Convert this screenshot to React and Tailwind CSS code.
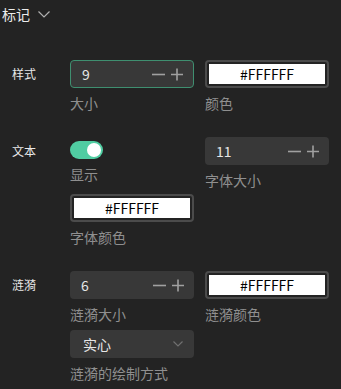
import React from "react";

const font = { fontFamily: '"Noto Sans CJK SC", "Noto Sans", sans-serif' };

function Minus() {
  return (
    <svg width="13" height="13" viewBox="0 0 13 13">
      <path d="M0 6.5 H13" stroke="#a0a0a0" strokeWidth="1.6" />
    </svg>
  );
}
function Plus() {
  return (
    <svg width="12" height="13" viewBox="0 0 12 13">
      <path d="M0 6.5 H12 M6 0.5 V12.5" stroke="#a0a0a0" strokeWidth="1.6" />
    </svg>
  );
}

function NumberBox({ value, focused }) {
  return (
    <div
      className={
        "flex h-[28px] w-[124px] items-center justify-between rounded-[4px] bg-[#383838] pl-[11px] pr-[10px] " +
        (focused ? "border border-[#3f8f70]" : "")
      }
    >
      <span className="text-[14px] leading-none text-[#e6e6e6]">{value}</span>
      <div className="flex items-center gap-[6px]">
        <Minus />
        <Plus />
      </div>
    </div>
  );
}

function ColorBox() {
  return (
    <div className="h-[28px] w-[124px] rounded-[4px] border-2 border-[#4b4b4b] p-[2px]">
      <div className="flex h-full w-full items-center justify-center bg-white text-[14px] leading-none text-black">
        #FFFFFF
      </div>
    </div>
  );
}

function Label({ children }) {
  return <div className="mt-[5px] text-[14px] leading-[20px] text-[#8f8f8f]">{children}</div>;
}

function Toggle() {
  return (
    <div className="mt-[4px] flex h-[18px] w-[33px] items-center justify-end rounded-full bg-[#50cda2] pr-[2px]">
      <div className="h-[14px] w-[14px] rounded-full bg-white" />
    </div>
  );
}

function Select() {
  return (
    <div className="flex h-[28px] w-[124px] items-center justify-between rounded-[4px] bg-[#383838] pl-[13px] pr-[11px]">
      <span className="text-[14px] leading-none text-[#e6e6e6]">实心</span>
      <svg width="10" height="6" viewBox="0 0 10 6">
        <path d="M0.5 0.5 L5 5 L9.5 0.5" fill="none" stroke="#707070" strokeWidth="1.2" />
      </svg>
    </div>
  );
}

function Section({ title, children, rowGap }) {
  return (
    <div className="flex">
      <div className="flex h-[28px] w-[70px] items-center pl-[12px] text-[12px] text-[#e8e8e8]">{title}</div>
      <div className={"flex w-[260px] flex-wrap gap-x-[11px] " + rowGap}>{children}</div>
    </div>
  );
}

export default function App() {
  return (
    <div style={font} className="h-[389px] w-[341px] overflow-hidden bg-[#232323]">
      <div className="flex h-[28px] items-center pl-[2px]">
        <span className="text-[14px] text-[#ececec]">标记</span>
        <svg className="ml-[8px]" width="12" height="7" viewBox="0 0 12 7">
          <path d="M0.5 0.5 L6 6 L11.5 0.5" fill="none" stroke="#b0b0b0" strokeWidth="1.2" />
        </svg>
      </div>
      <div className="mt-[32px] flex flex-col gap-[24px]">
        <Section title="样式" rowGap="gap-y-[4px]">
          <div className="w-[124px]">
            <NumberBox value="9" focused />
            <Label>大小</Label>
          </div>
          <div className="w-[124px]">
            <ColorBox />
            <Label>颜色</Label>
          </div>
        </Section>
        <Section title="文本" rowGap="gap-y-[4px]">
          <div className="w-[124px]">
            <Toggle />
            <Label>显示</Label>
          </div>
          <div className="w-[124px]">
            <NumberBox value="11" />
            <Label>字体大小</Label>
          </div>
          <div className="w-[124px]">
            <ColorBox />
            <Label>字体颜色</Label>
          </div>
        </Section>
        <Section title="涟漪" rowGap="gap-y-[6px]">
          <div className="w-[124px]">
            <NumberBox value="6" />
            <Label>涟漪大小</Label>
          </div>
          <div className="w-[124px]">
            <ColorBox />
            <Label>涟漪颜色</Label>
          </div>
          <div className="w-[124px]">
            <Select />
            <Label>涟漪的绘制方式</Label>
          </div>
        </Section>
      </div>
    </div>
  );
}
